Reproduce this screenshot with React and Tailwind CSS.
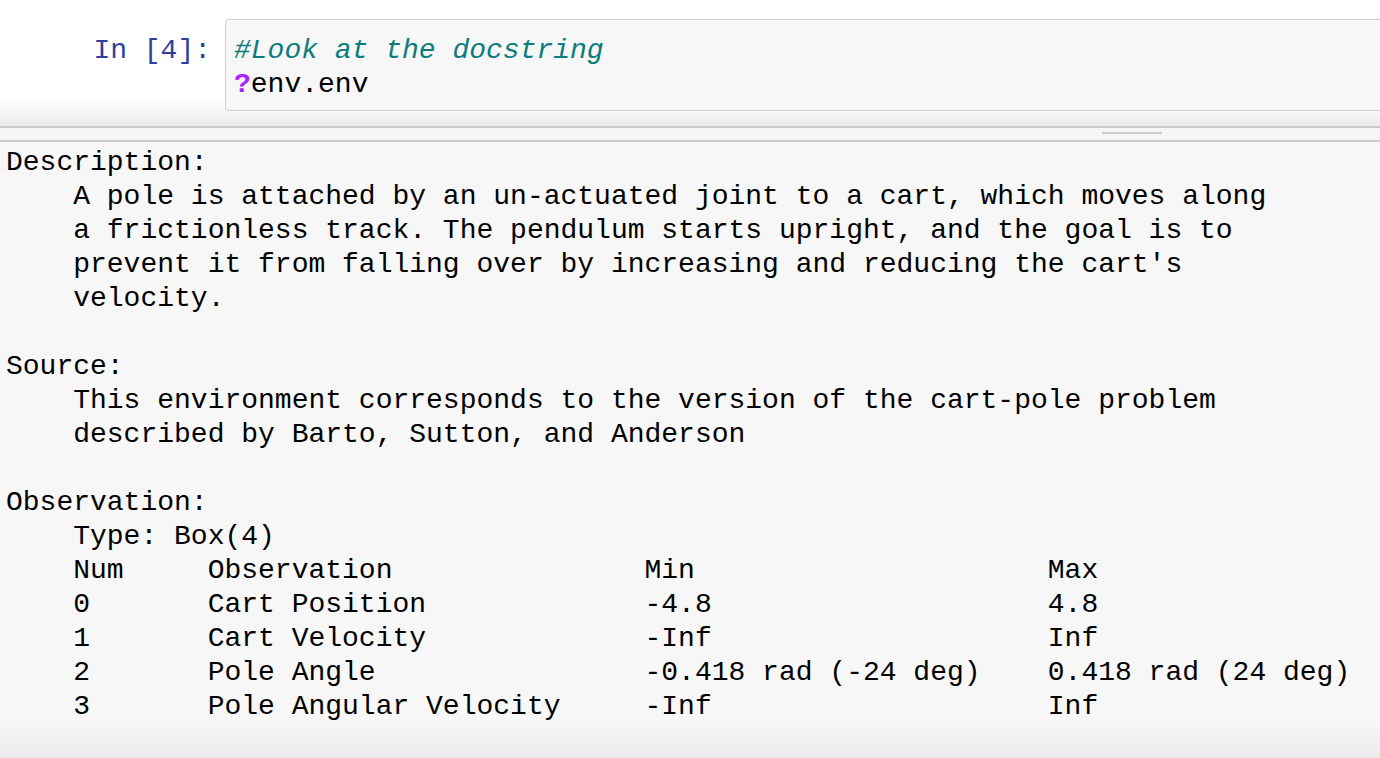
import React from 'react';

const docLines = [
  'Description:',
  '    A pole is attached by an un-actuated joint to a cart, which moves along',
  '    a frictionless track. The pendulum starts upright, and the goal is to',
  "    prevent it from falling over by increasing and reducing the cart's",
  '    velocity.',
  '',
  'Source:',
  '    This environment corresponds to the version of the cart-pole problem',
  '    described by Barto, Sutton, and Anderson',
  '',
  'Observation:',
  '    Type: Box(4)',
  '    Num     Observation               Min                     Max',
  '    0       Cart Position             -4.8                    4.8',
  '    1       Cart Velocity             -Inf                    Inf',
  '    2       Pole Angle                -0.418 rad (-24 deg)    0.418 rad (24 deg)',
  '    3       Pole Angular Velocity     -Inf                    Inf',
];

export default function App() {
  return (
    <div className="w-[1380px] h-[758px] overflow-hidden bg-[#f7f7f7] font-['Liberation_Mono',monospace] text-[28px] text-black">
      {/* Input cell */}
      <div className="h-[126px] pt-[19px] flex bg-[linear-gradient(to_bottom,#ffffff_0,#ffffff_98px,#ebebeb_126px)]">
        <div className="w-[225px] shrink-0 pr-[14px] pt-[15px] text-right leading-[34px] text-[#303f9f]">
          In&nbsp;[4]:
        </div>
        <div className="flex-1 -mr-[10px] h-[92px] border border-[#cfcfcf] rounded-[3px] bg-[#f7f7f7] pl-[8px] pt-[14px] leading-[34px] whitespace-pre">
          <div className="italic text-[#0b7d7d]">#Look at the docstring</div>
          <div>
            <span className="font-bold text-[#aa22ff]">?</span>env.env
          </div>
        </div>
      </div>

      {/* Pager divider */}
      <div className="h-[16px] border-t-2 border-b-2 border-[#cccccc] bg-[#f5f5f5] pt-[4px]">
        <div className="ml-[1102px] w-[60px] h-[2px] bg-[#cccccc]" />
      </div>

      {/* Pager */}
      <div className="h-[616px] pt-[4px] pl-[6px] leading-[34px] whitespace-pre bg-[linear-gradient(to_bottom,#f7f7f7_0,#f7f7f7_580px,#ebebeb_616px)]">
        {docLines.map((line, i) => (
          <div key={i} className="h-[34px]">{line}</div>
        ))}
      </div>
    </div>
  );
}
